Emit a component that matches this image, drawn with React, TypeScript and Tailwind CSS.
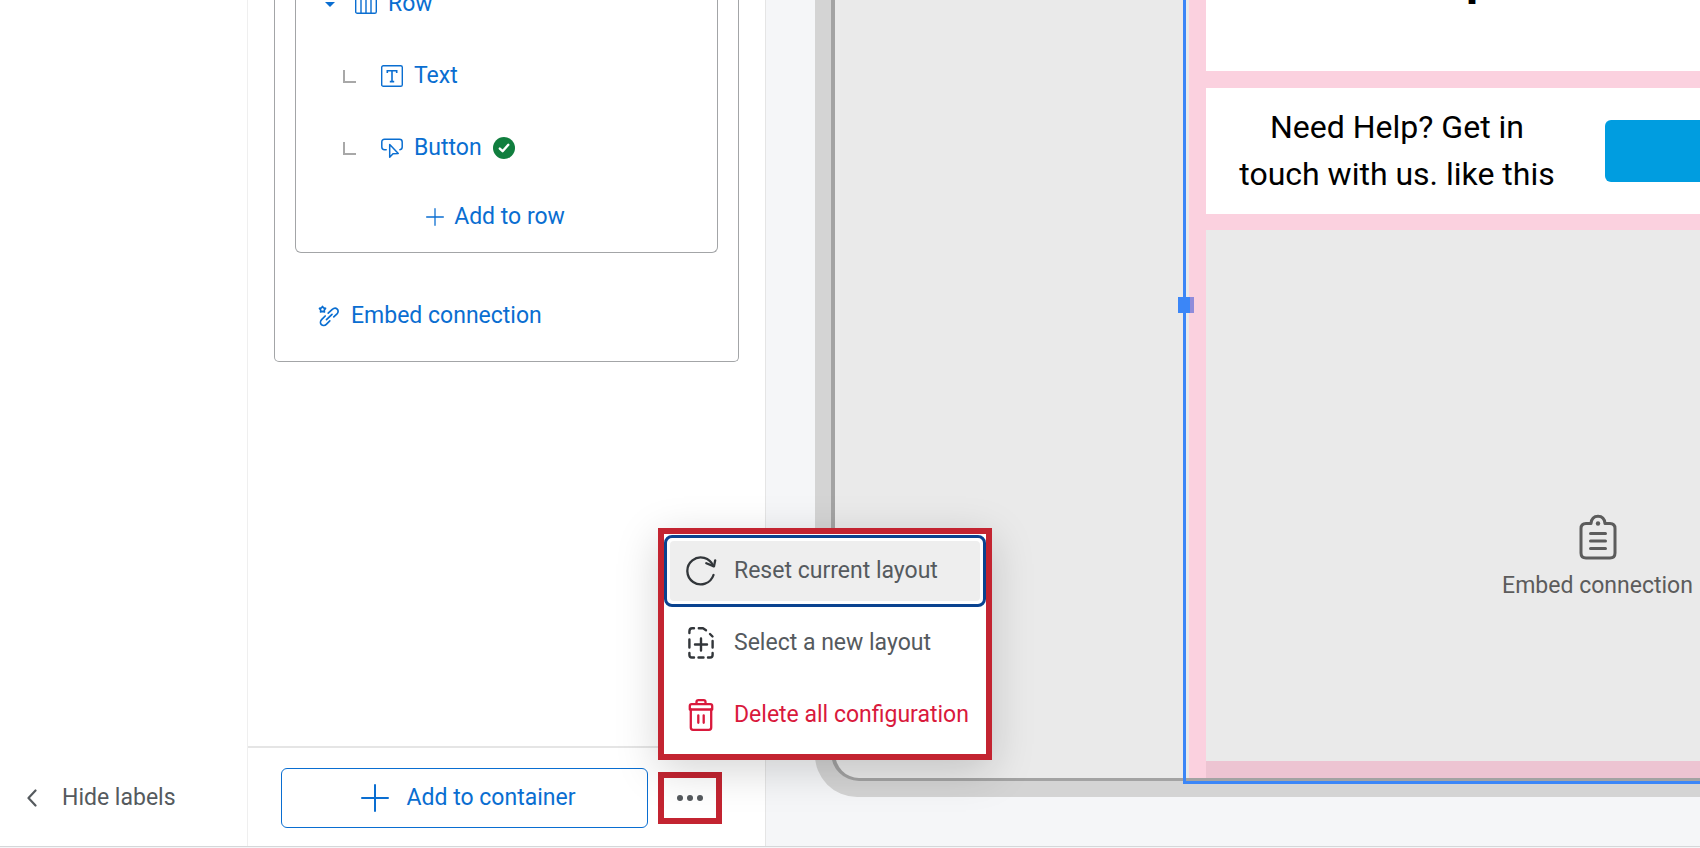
import type { ReactNode } from "react";

function TreeItem({ icon, label, done = false }: { icon: ReactNode; label: string; done?: boolean }) {
    return (
        <li className="flex h-[72px] items-center pl-[47px]">
            <span className="h-[13px] w-[13px] border-b-2 border-l-2 border-[#a8a8a8]" />
            <button type="button" className="ml-[25px] flex items-center gap-[11px]">
                {icon}
                {label}
            </button>
            {done && (
                <svg viewBox="0 0 22 22" className="ml-[11px] h-[22px] w-[22px]" aria-hidden="true">
                    <circle cx="11" cy="11" r="11" fill="#107e3e" />
                    <path d="M6.8 11.6 9.6 14.2 15.3 7.8" fill="none" stroke="#fff" strokeWidth="2.4" strokeLinecap="round" strokeLinejoin="round" />
                </svg>
            )}
        </li>
    );
}

function RowIcon() {
    return (
        <svg viewBox="0 0 22 22" className="h-[22px] w-[22px]" fill="none" stroke="currentColor" strokeWidth="1.4" aria-hidden="true">
            <rect x="0.7" y="0.7" width="20.6" height="19.6" rx="1.6" />
            <path d="M6 1v19M11 1v19M16 1v19" />
        </svg>
    );
}

function TextIcon() {
    return (
        <svg viewBox="0 0 22 22" className="h-[22px] w-[22px]" fill="none" stroke="currentColor" strokeWidth="1.4" aria-hidden="true">
            <rect x="0.7" y="0.7" width="20.6" height="20.6" rx="1.6" />
            <path d="M6.3 8V5.8h9.4V8M11 6v10.6M8.8 16.6h4.4" strokeWidth="1.6" />
        </svg>
    );
}

function ButtonIcon() {
    return (
        <svg viewBox="0 0 22 22" className="h-[22px] w-[22px]" fill="none" stroke="currentColor" strokeWidth="1.5" strokeLinecap="round" strokeLinejoin="round" aria-hidden="true">
            <path d="M5.2 12.7H3.6C1.8 12.7.8 11.7.8 10V4.9C.8 3.2 1.8 2.2 3.6 2.2h14.8c1.8 0 2.8 1 2.8 2.7V10c0 1.6-.8 2.5-2.3 2.7" />
            <path d="M8.700 7.500v12.800l3.300-3.600 5.300-.3z" />
        </svg>
    );
}

function LinkIcon() {
    return (
        <svg viewBox="0 0 22 22" className="h-[22px] w-[22px]" fill="none" stroke="currentColor" strokeWidth="1.7" strokeLinecap="round" strokeLinejoin="round" aria-hidden="true">
            <path d="M10.200 8.200 14.300 4.400c1.500-1.400 3.600-1.600 4.900-.3 1.300 1.300 1.200 3.400-.2 4.800l-3.200 3" />
            <path d="M8.500 14.600 14 9.300M7.200 11l-3.600 3.700c-1.400 1.400-1.500 3.600-.2 4.900 1.300 1.300 3.500 1.100 4.900-.3l3.500-3.400" />
            <path d="m4.500 1.400 1 1.500 2 .5-1.200 1.600.1 2-1.900-.6-1.900.6.1-2-1.200-1.600 2-.5z" />
        </svg>
    );
}

function ResetIcon() {
    return (
        <svg viewBox="0 0 32 32" className="h-8 w-8" fill="none" stroke="#32363a" strokeWidth="2.300" strokeLinecap="round" strokeLinejoin="round" aria-hidden="true">
            <path d="M28.500 20A13.400 13.400 0 1 1 28.200 11" />
            <path d="M21.300 8.300 29 11.400 30.200 5.300" />
        </svg>
    );
}

function NewLayoutIcon() {
    return (
        <svg viewBox="0 0 32 32" className="h-8 w-8" fill="none" stroke="#32363a" strokeWidth="2.400" strokeLinecap="round" strokeLinejoin="round" aria-hidden="true">
            <path d="M4.400 6V4.500C4.400 2.500 5.200 1.300 7.200 1.300H9M13.800 1.300H18l3 2M25 7l2.500 2.500M4.400 12.500v8M27.600 14v6.500M4.400 26v2c0 1.600.8 2.500 2.400 2.500H9M13.500 30.500h5M23 30.500h2.200c1.600 0 2.400-.9 2.400-2.500v-2" />
            <path d="M16 11.500v12M10 17.500h12" />
        </svg>
    );
}

function TrashIcon() {
    return (
        <svg viewBox="0 0 32 32" className="h-8 w-8" fill="none" stroke="currentColor" strokeWidth="2.300" strokeLinecap="round" strokeLinejoin="round" aria-hidden="true">
            <path d="M6.700 5.200h18.600c1.200 0 1.900.8 1.900 1.800v3.500H4.800V7c0-1 .7-1.800 1.900-1.800zM11.500 5V3c0-1.200.8-1.800 1.900-1.800h5.200c1.200 0 1.900.6 1.900 1.800v2" />
            <path d="M5.800 10.500V28.600c0 1.400.8 2.200 2.200 2.200h16c1.400 0 2.200-.8 2.200-2.200V10.500M13.300 16.300v7.500M18.700 16.300v7.500" />
        </svg>
    );
}

function ClipboardIcon() {
    return (
        <svg viewBox="0 0 38 46" className="h-[46px] w-[38px]" fill="none" stroke="#5c5c5c" strokeWidth="3" strokeLinecap="round" strokeLinejoin="round" aria-hidden="true">
            <path d="M12 9.500C12.500 4.500 15 2.300 19 2.300s6.500 2.200 7 7.200h5c3.200 0 5 1.800 5 5V39c0 3.200-1.800 5-5 5H7c-3.200 0-5-1.800-5-5V14.500c0-3.200 1.800-5 5-5z" />
            <path d="M11.500 19.500h15M11.500 27h15M11.500 34.500h15" />
            <circle cx="19" cy="9.500" r="2.200" fill="#5c5c5c" stroke="none" />
        </svg>
    );
}

function Plus({ className }: { className: string }) {
    return (
        <svg viewBox="0 0 28 28" className={className} stroke="currentColor" strokeWidth="2" strokeLinecap="round" aria-hidden="true">
            <path d="M14 1v26M1 14h26" />
        </svg>
    );
}

function LayoutMenu() {
    return (
        <div
            role="menu"
            className="absolute bottom-16 left-0 z-10 flex w-[334px] flex-col border-6 border-[#c32431] bg-white pb-[3px] text-[#555a5e] shadow-[0_10px_40px_rgba(0,0,0,0.17)]"
        >
            <button type="button" role="menuitem" className="mt-px flex h-[72px] items-center rounded-lg border-3 border-[#0a4390] p-[3px] text-left">
                <span className="flex h-full grow items-center gap-[17px] rounded-sm bg-[#eeeeee] pl-[15px]">
                    <ResetIcon />
                    Reset current layout
                </span>
            </button>
            <button type="button" role="menuitem" className="flex h-[72px] items-center gap-[17px] pl-[21px]">
                <NewLayoutIcon />
                Select a new layout
            </button>
            <button type="button" role="menuitem" className="flex h-[72px] items-center gap-[17px] pl-[21px] text-[#d9193c]">
                <TrashIcon />
                Delete all configuration
            </button>
        </div>
    );
}

function TreePanel() {
    return (
        <section className="flex w-[518px] shrink-0 flex-col border-r border-[#e5e5e5] bg-white text-[#0a6ed1]">
            <div className="grow px-[26px]">
                <div className="rounded-b-[5px] border border-t-0 border-[#a3a5a7] px-5 pb-[9px]">
                    <div className="rounded-b-md border border-t-0 border-[#a3a5a7] pb-[2px]">
                        <ul>
                            <li className="-mt-8 flex h-[72px] items-center pl-[29px]">
                                <svg viewBox="0 0 10 5" className="h-[5px] w-[10px]" fill="currentColor" aria-hidden="true">
                                    <path d="M0 0h10L5 5z" />
                                </svg>
                                <button type="button" className="ml-5 flex items-center gap-[11px]">
                                    <RowIcon />
                                    Row
                                </button>
                            </li>
                            <TreeItem icon={<TextIcon />} label="Text" />
                            <TreeItem icon={<ButtonIcon />} label="Button" done />
                        </ul>
                        <button type="button" className="flex h-[66px] w-full items-center justify-center gap-[10px] pr-[22px]">
                            <Plus className="h-[18px] w-[18px]" />
                            Add to row
                        </button>
                    </div>
                    <button type="button" className="mt-[27px] flex h-[72px] items-center gap-[11px] pl-[23px]">
                        <LinkIcon />
                        Embed connection
                    </button>
                </div>
            </div>
            <div className="flex items-center gap-[10px] border-t-2 border-[#e5e5e5] pt-5 pb-[18px] pl-[33px]">
                <button type="button" className="flex h-[60px] w-[367px] items-center justify-center gap-[18px] rounded-md border border-[#0a6ed1] pl-[7px]">
                    <Plus className="h-7 w-7" />
                    Add to container
                </button>
                <div className="relative">
                    <button type="button" aria-label="More actions" className="flex h-[52px] w-16 items-center justify-center gap-1 border-6 border-[#c32431] bg-white">
                        <span className="h-[6px] w-[6px] rounded-full bg-[#555a5e]" />
                        <span className="h-[6px] w-[6px] rounded-full bg-[#555a5e]" />
                        <span className="h-[6px] w-[6px] rounded-full bg-[#555a5e]" />
                    </button>
                    <LayoutMenu />
                </div>
            </div>
        </section>
    );
}

function Preview() {
    return (
        <main className="flex min-w-0 grow overflow-hidden bg-[#f5f6f8] pb-[49px] pl-[49px]">
            <div className="flex min-w-0 grow rounded-bl-[42px] bg-[#d4d4d4] pb-4 pl-4">
                <div className="flex min-w-0 grow rounded-bl-[28px] border-b-3 border-l-4 border-[#a3a3a3] bg-[#eaeaea] pl-[348px]">
                    <div className="relative flex w-[806px] shrink-0 pl-[6px]">
                        <div className="flex grow flex-col bg-[#fbd1df] pl-[17px]">
                            <div className="h-[71px] bg-white pl-[260px]">
                                <h2 className="-mt-[46px] text-[48px] leading-none font-bold text-black">p</h2>
                            </div>
                            <div className="mt-[17px] flex h-[126px] items-center bg-white">
                                <p className="w-[382px] px-6 text-center text-[32px] leading-[47px] text-black">Need Help? Get in touch with us. like this</p>
                                <button type="button" aria-label="Contact" className="mx-[17px] h-[62px] grow rounded-md bg-[#009de0]" />
                            </div>
                            <div className="mt-4 flex grow flex-col items-center gap-3 bg-[#eaeaea] pt-[284px] text-[#5c5c5c]">
                                <ClipboardIcon />
                                Embed connection
                            </div>
                            <div className="h-[17px] bg-[#edc4d2]" />
                        </div>
                        {/* selection frame and its drag handle */}
                        <div className="pointer-events-none absolute inset-x-0 top-0 -bottom-[6px] border-b-3 border-l-3 border-[#3b86f7]">
                            <div className="absolute top-[297px] -left-[8px] flex h-4 w-4">
                                <span className="grow bg-[#3b86f7]" />
                                <span className="w-1 bg-[#8f8bdb]" />
                            </div>
                        </div>
                    </div>
                </div>
            </div>
        </main>
    );
}

export default function App() {
    return (
        <div className="flex min-h-screen flex-col overflow-hidden bg-[#f5f6f8] font-['Roboto',sans-serif] text-[23px] leading-7">
            <div className="flex grow">
                <aside className="flex w-[248px] shrink-0 flex-col justify-end border-r border-[#efefef] bg-white pb-[34px] pl-[27px]">
                    <button type="button" className="flex items-center gap-[25px] text-[#555a5e]">
                        <svg viewBox="0 0 10 18" className="h-[18px] w-[10px]" fill="none" stroke="currentColor" strokeWidth="2.200" strokeLinecap="round" strokeLinejoin="round" aria-hidden="true">
                            <path d="M8.500 1.500 1.500 9l7 7.500" />
                        </svg>
                        Hide labels
                    </button>
                </aside>
                <TreePanel />
                <Preview />
            </div>
            <div className="h-[2px] border-t border-[#d5d7d9]" />
        </div>
    );
}
